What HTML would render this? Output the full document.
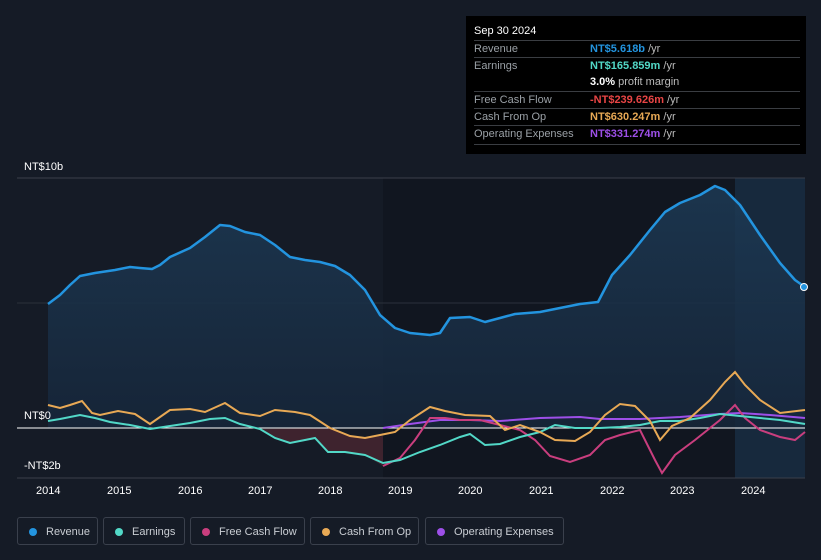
<!DOCTYPE html><html><head><style>
body{margin:0;width:821px;height:560px;background:#151b26;font-family:"Liberation Sans",sans-serif;overflow:hidden;position:relative}
.tt{position:absolute;left:466px;top:16px;width:340px;height:138px;background:#000;font-size:11px;color:#9aa0a6}
.tt .h{position:absolute;left:8px;top:9px;color:#fff;font-size:11px}
.row{position:absolute;left:8px;width:326px;height:17px;border-top:1px solid #3a3d42;line-height:17px}
.row span{position:absolute;left:116px;font-weight:bold}
.row i{font-style:normal;font-weight:normal;color:#bbb}
.lbl{position:absolute;color:#fff;font-size:11px}
.leg{position:absolute;top:517px;height:28px;border:1px solid #3a404c;border-radius:3px;color:#c9cdd3;font-size:11px;line-height:28px;box-sizing:border-box;padding-left:28px}
.leg b{position:absolute;left:11px;top:10px;width:8px;height:8px;border-radius:50%}
</style></head><body>
<svg width="821" height="560" style="position:absolute;left:0;top:0">
<defs><linearGradient id="g" x1="0" y1="0" x2="0" y2="1"><stop offset="0" stop-color="#1d3a55"/><stop offset="1" stop-color="#16263a"/></linearGradient></defs>
<rect x="383" y="178" width="352" height="300" fill="#111620"/>
<rect x="735" y="178" width="70" height="300" fill="#17293d"/>
<line x1="17" y1="178" x2="805" y2="178" stroke="#3a3f4a"/>
<line x1="17" y1="303" x2="805" y2="303" stroke="#2a303b"/>
<path d="M48,304 L60,295 70,285 80,276 95,273 115,270 130,267 140,268 152,269 160,265 170,257 190,248 205,237 220,225 230,226 245,232 260,235 275,245 290,257 305,260 320,262 335,266 350,275 365,290 380,315 395,328 410,333 430,335 440,333 450,318 470,317 485,322 500,318 515,314 540,312 560,308 580,304 598,302 612,275 630,255 650,230 665,212 680,203 700,195 715,186 725,190 740,205 760,235 780,263 795,280 805,287 L805,428 L48,428Z" fill="url(#g)" opacity="0.85"/>
<path d="M330,428 L350,436 365,438 383,436 L383,466 365,455 345,452 328,452 315,438 305,440 290,443 275,438 260,429Z" fill="#5a2a33" opacity="0.6"/>
<line x1="17" y1="428" x2="805" y2="428" stroke="#fff" stroke-width="1"/>
<line x1="17" y1="478" x2="805" y2="478" stroke="#3a3f4a"/>
<path d="M48,304 L60,295 70,285 80,276 95,273 115,270 130,267 140,268 152,269 160,265 170,257 190,248 205,237 220,225 230,226 245,232 260,235 275,245 290,257 305,260 320,262 335,266 350,275 365,290 380,315 395,328 410,333 430,335 440,333 450,318 470,317 485,322 500,318 515,314 540,312 560,308 580,304 598,302 612,275 630,255 650,230 665,212 680,203 700,195 715,186 725,190 740,205 760,235 780,263 795,280 805,287" fill="none" stroke="#2394df" stroke-width="2.5" stroke-linejoin="round"/>
<path d="M383,428 L410,424 440,420 470,420 500,421 540,418 580,417 600,419 640,419 680,417 720,414 740,413 770,415 805,418" fill="none" stroke="#9d4fe8" stroke-width="2"/>
<path d="M383,466 L400,458 415,440 430,418 445,418 460,420 480,420 500,425 520,430 535,440 550,456 570,462 590,455 605,440 620,435 640,430 655,460 662,473 675,455 695,440 720,420 735,405 745,418 760,430 780,437 795,440 805,432" fill="none" stroke="#c93e7e" stroke-width="2"/>
<path d="M48,421 L60,419 80,415 95,418 110,422 130,425 150,429 170,426 190,423 210,419 225,418 240,424 260,429 275,438 290,443 305,440 315,438 328,452 345,452 365,455 383,463 400,460 420,452 440,445 460,437 470,434 485,445 500,444 520,437 540,432 555,425 575,428 600,428 620,427 640,425 660,421 680,421 700,418 720,414 740,416 760,418 780,420 805,424" fill="none" stroke="#52d8c7" stroke-width="2"/>
<path d="M48,405 L60,408 70,405 82,401 92,413 100,415 118,411 135,414 150,424 170,410 190,409 205,412 225,403 240,413 260,416 275,410 295,412 310,415 330,428 350,436 365,438 380,435 395,432 410,420 430,407 445,411 465,415 490,416 505,430 520,425 540,432 555,440 575,441 590,432 605,415 620,404 635,406 650,421 660,440 672,426 690,418 710,400 725,382 735,372 745,385 760,400 780,413 805,410" fill="none" stroke="#e8a955" stroke-width="2"/>
<circle cx="804" cy="287" r="3.5" fill="#2394df" stroke="#fff"/>
</svg>
<div class="tt"><div class="h">Sep 30 2024</div>
<div class="row" style="top:24px">Revenue<span style="color:#2394df">NT$5.618b <i>/yr</i></span></div>
<div class="row" style="top:41px">Earnings<span style="color:#52d8c7">NT$165.859m <i>/yr</i></span></div>
<div class="row" style="top:58px;border:none"><span style="color:#fff">3.0% <i>profit margin</i></span></div>
<div class="row" style="top:75px">Free Cash Flow<span style="color:#e84545">-NT$239.626m <i>/yr</i></span></div>
<div class="row" style="top:92px">Cash From Op<span style="color:#e8a955">NT$630.247m <i>/yr</i></span></div>
<div class="row" style="top:109px">Operating Expenses<span style="color:#9d4fe8">NT$331.274m <i>/yr</i></span></div>
<div class="row" style="top:128px;height:0"></div></div>
<div class="lbl" style="left:24px;top:161px">NT$10b</div>
<div class="lbl" style="left:24px;top:410px">NT$0</div>
<div class="lbl" style="left:24px;top:460px">-NT$2b</div>
<div class="lbl" style="left:36px;top:485px">2014</div><div class="lbl" style="left:107px;top:485px">2015</div><div class="lbl" style="left:178px;top:485px">2016</div><div class="lbl" style="left:248px;top:485px">2017</div><div class="lbl" style="left:318px;top:485px">2018</div><div class="lbl" style="left:388px;top:485px">2019</div><div class="lbl" style="left:458px;top:485px">2020</div><div class="lbl" style="left:529px;top:485px">2021</div><div class="lbl" style="left:600px;top:485px">2022</div><div class="lbl" style="left:670px;top:485px">2023</div><div class="lbl" style="left:741px;top:485px">2024</div>
<div class="leg" style="left:17px;width:81px"><b style="background:#2394df"></b>Revenue</div>
<div class="leg" style="left:103px;width:82px"><b style="background:#52d8c7"></b>Earnings</div>
<div class="leg" style="left:190px;width:115px"><b style="background:#c93e7e"></b>Free Cash Flow</div>
<div class="leg" style="left:310px;width:109px"><b style="background:#e8a955"></b>Cash From Op</div>
<div class="leg" style="left:425px;width:139px"><b style="background:#9d4fe8"></b>Operating Expenses</div>
</body></html>
